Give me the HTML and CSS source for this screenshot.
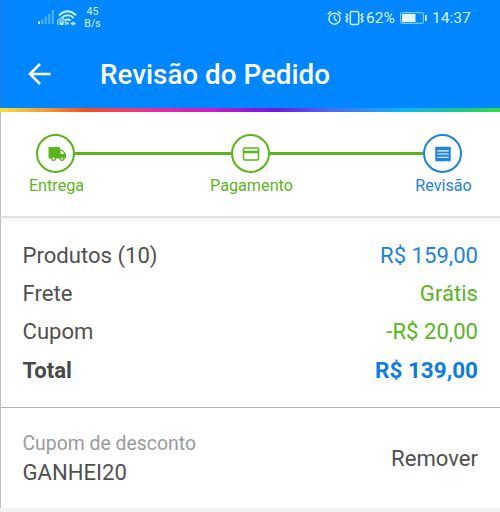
FILE: index.html
```html
<!DOCTYPE html>
<html lang="pt-BR">
<head>
<meta charset="utf-8">
<title>Revisão do Pedido</title>
<link rel="stylesheet" href="styles.css">
</head>
<body>
<div class="screen">
  <header class="header">
    <div class="status">
      <div class="status-left">
        <svg class="signal" width="17" height="16" viewBox="0 0 17 16"><path class="bar-on" d="M0 12.5h2V15H0z"/><path class="bar-off" d="M3.3 10.5h2V15h-2zM6.8 7.5h2V15h-2zM10.3 5h2v10h-2zM13.8 1h2v14h-2z"/></svg>
        <svg class="wifi" width="21" height="17" viewBox="0 0 21 17"><path class="wave" d="M2 5.2Q10.7-2.5 19 5.2M4.5 8Q10.7 2.5 16.7 8M7.8 10.6Q10.7 8.3 13.7 10.6"/><path class="hotspot" d="M1.2 14.8a4.1 4.1 0 1 1 6.8 0M3 13.5a2 2 0 1 1 3.3 0"/><path class="dots" d="M3.6 12h2l1 3h-4zM9.5 12.3h2.2v2.2H9.5zM13.4 13.4l2.5-2v4zM18.9 13.4l-2.5-2v4z"/></svg>
        <div class="speed"><span>45</span><span>B/s</span></div>
      </div>
      <div class="status-right">
        <svg class="alarm" width="15" height="16" viewBox="0 0 15 16"><circle cx="7.5" cy="8.7" r="5.5"/><path d="M7.5 5.3v3.7l2.5 2M.8 4.2l3.2-2.8M14.2 4.2l-3.2-2.8"/></svg>
        <svg class="vibrate" width="19" height="16" viewBox="0 0 19 16"><rect x="5.3" y="1.5" width="8.4" height="13" rx="1.5"/><path d="M1 3.5l1.8 1.8L1 7l1.8 1.8L1 10.6l1.8 1.8M18 3.5l-1.8 1.8L18 7l-1.8 1.8 1.8 1.8-1.8 1.8"/></svg>
        <span class="percent">62%</span>
        <svg class="battery" width="27" height="12" viewBox="0 0 27 12"><rect class="shell" x=".6" y=".6" width="22.8" height="10.8" rx="1.5"/><path class="charge" d="M2 2h13.5v8H2zM25 3h1.7v6H25z"/></svg>
        <span class="clock">14:37</span>
      </div>
    </div>
    <div class="toolbar">
      <svg class="back" width="23" height="22" viewBox="0 0 23 22"><path d="M22.5 11H2M12 1L2 11l10 10"/></svg>
      <h1>Revisão do Pedido</h1>
    </div>
  </header>
  <div class="rainbow"></div>
  <nav class="stepper">
    <div class="step">
      <div class="ring"><svg class="truck" width="18" height="16" viewBox="0 0 18 16"><path d="M1.5 1H11a1 1 0 0 1 1 1v1.7h2.7L18 8v4.6h-1.6a2.5 2.5 0 0 1-5 0H8a2.5 2.5 0 0 1-5 0H.5V2a1 1 0 0 1 1-1z"/><path class="hole" d="M12.6 5h1.7l2 3h-3.7z"/><circle class="hole" cx="5.5" cy="12.6" r="1.1"/><circle class="hole" cx="13.9" cy="12.6" r="1.1"/></svg></div>
      <span>Entrega</span>
    </div>
    <div class="line line-first"></div>
    <div class="step">
      <div class="ring"><svg width="18" height="14" viewBox="0 0 18 14"><rect class="card" x="1.5" y="1" width="15" height="12" rx="1"/><path d="M1.5 3.7h15v2.6h-15z"/></svg></div>
      <span>Pagamento</span>
    </div>
    <div class="line line-second"></div>
    <div class="step step-current">
      <div class="ring"><svg width="16" height="16" viewBox="0 0 16 16"><path d="M.3.2l1.3 1L2.9.2l1.3 1 1.3-1 1.3 1 1.2-1 1.3 1 1.3-1 1.3 1 1.3-1 1.2 1 1.3-1v15.6l-1.3-1-1.2 1-1.3-1-1.3 1-1.3-1-1.3 1-1.2-1-1.3 1-1.3-1-1.3 1-1.3-1-1.3 1z"/><path class="hole" d="M2.3 4.3h11.4v1.1H2.3zM2.3 7.5h11.4v1.1H2.3zM2.3 10.7h11.4v1.1H2.3z"/></svg></div>
      <span>Revisão</span>
    </div>
  </nav>
  <section class="summary">
    <div class="row"><span>Produtos (10)</span><span class="blue">R$ 159,00</span></div>
    <div class="row"><span>Frete</span><span class="green">Grátis</span></div>
    <div class="row"><span>Cupom</span><span class="green">-R$ 20,00</span></div>
    <div class="row total"><span>Total</span><span class="blue">R$ 139,00</span></div>
  </section>
  <section class="coupon">
    <div class="coupon-info"><span class="caption">Cupom de desconto</span><span class="code">GANHEI20</span></div>
    <span class="remove">Remover</span>
  </section>
</div>
</body>
</html>
```
FILE: styles.css
```css
* { box-sizing: border-box; }
body { margin: 0; font-family: Roboto, sans-serif; background: #f2f2f2; }
.screen { width: 500px; height: 512px; overflow: hidden; color: #505050; display: flex; flex-direction: column; }
.screen > * { flex-shrink: 0; }
svg { display: block; flex-shrink: 0; }
.header { height: 108px; background: #0086ff; color: #fff; border-left: 1px solid #2e7dc9; }
.status { height: 36px; display: flex; justify-content: space-between; padding: 0 29px 0 37px; color: #d9f4ff; }
.status-left, .status-right { display: flex; align-items: center; }
.bar-on { fill: #d9f4ff; }
.bar-off { fill: #55b5ff; }
.signal { margin-top: -2px; }
.wifi { margin-left: 2px; }
.wave { fill: none; stroke: #c9f3ff; stroke-width: 1.9; }
.hotspot { fill: none; stroke: #8dd5ff; stroke-width: 1.4; }
.dots { fill: #c9f3ff; }
.speed { display: flex; flex-direction: column; align-items: center; width: 20px; margin-left: 4.5px; font-size: 10.5px; line-height: 12px; }
.alarm, .vibrate { fill: none; stroke: #d0f1ff; stroke-width: 1.5; }
.vibrate { margin-left: 3px; }
.percent { font-size: 15.5px; width: 31px; margin-left: 2px; }
.battery { margin-left: 3px; }
.shell { fill: none; stroke: #84caff; stroke-width: 1.1; }
.charge { fill: #e0f6ff; }
.clock { font-size: 15.5px; margin-left: 5px; width: 39px; }
.toolbar { height: 72px; display: flex; align-items: center; padding: 5px 0 0 27px; }
.back { fill: none; stroke: #fff; stroke-width: 2.5; margin-top: -2px; }
h1 { margin: 0 0 0 49px; font-size: 27.8px; line-height: 32px; font-weight: 500; white-space: nowrap; }
.rainbow { height: 4px; background: linear-gradient(90deg, #f5df3b 0, #f2a33b 8%, #f0531d 17%, #e92e9c 31%, #d01bc4 42%, #7116e0 55%, #4c6bf0 66%, #0fb3f5 80%, #17c5a0 90%, #35dc46 100%); }
.stepper { height: 106px; display: flex; padding-top: 22px; background: #fff; border-left: 1px solid #bdbdbd; border-bottom: 2px solid #e2e2e2; color: #5ab41e; }
.step { display: flex; flex-direction: column; align-items: center; width: 39px; flex-shrink: 0; }
.step:first-child { margin-left: 35px; }
.ring { width: 39px; height: 39px; border: 2px solid currentColor; border-radius: 50%; display: flex; align-items: center; justify-content: center; }
.ring svg { fill: currentColor; }
.ring .truck { margin-left: 2px; }
.ring .hole { fill: #fff; }
.ring .card { fill: none; stroke: currentColor; stroke-width: 1.5; }
.step span { margin: 3px 0 0 2px; font-size: 16.2px; line-height: 20px; white-space: nowrap; }
.step-current { color: #1c82dc; }
.line { height: 3px; background: #5ab41e; margin-top: 18px; }
.line-first { width: 156px; }
.line-second { width: 153px; }
.summary { height: 190px; padding: 17.5px 22px 0; background: linear-gradient(#f3f3f3, #fff 5px); border-left: 1px solid #bdbdbd; border-bottom: 1px solid #b0b0b0; }
.row { height: 38.4px; display: flex; align-items: center; justify-content: space-between; font-size: 22.1px; }
.row span { white-space: nowrap; }
.row span:first-child { margin-left: -.5px; }
.blue { color: #1c82dc; }
.green { color: #5ab41e; }
.total { font-weight: 700; color: #484848; }
.total .blue { color: #0c7ce0; font-size: 22.5px; }
.coupon { height: 100px; display: flex; justify-content: space-between; align-items: center; padding: 0 22px 1px 21.5px; background: #fff; border-left: 1px solid #bdbdbd; }
.coupon-info { display: flex; flex-direction: column; }
.caption { font-size: 19.4px; line-height: 28px; color: #9a9a9a; }
.code, .remove { font-size: 22.1px; line-height: 28px; }
```
